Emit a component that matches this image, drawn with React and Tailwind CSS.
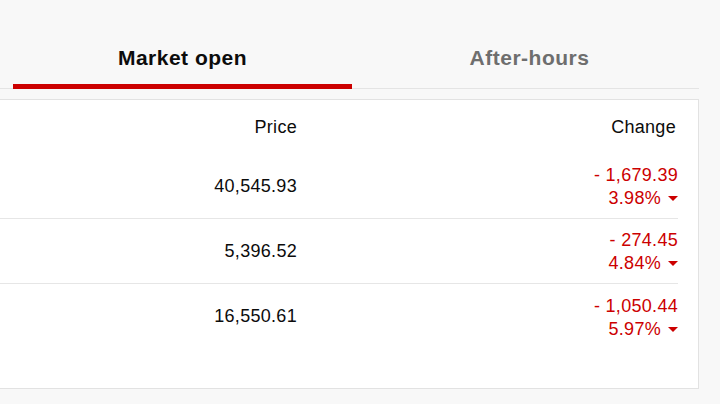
import React from "react";

const rows = [
  { price: "40,545.93", change: "- 1,679.39", pct: "3.98%" },
  { price: "5,396.52", change: "- 274.45", pct: "4.84%" },
  { price: "16,550.61", change: "- 1,050.44", pct: "5.97%" },
];

function Down() {
  return (
    <svg width="10" height="5" viewBox="0 0 10 5" className="ml-[7px]">
      <path d="M0 0 H10 L5 5 Z" fill="#cc0000" />
    </svg>
  );
}

export default function App() {
  return (
    <div
      className="w-[720px] h-[404px] bg-[#f8f8f8] overflow-hidden text-[#0c0c0c]"
      style={{ fontFamily: '"Liberation Sans", Arial, sans-serif' }}
    >
      <div className="w-[699px] flex gap-[8px] pl-[13px] border-b border-[#e4e4e4]">
        <div className="flex-1 -mb-px pt-[44px] pb-[12px] border-b-[5px] border-[#cc0000] text-center text-[21px] leading-[28px] font-bold tracking-[0.5px]">
          Market open
        </div>
        <div className="flex-1 -mb-px pt-[44px] pb-[12px] border-b-[5px] border-transparent text-center text-[21px] leading-[28px] font-bold tracking-[0.5px] text-[#6e6e6e]">
          After-hours
        </div>
      </div>
      <div className="mt-[10px] w-[699px] h-[290px] bg-white border-t border-r border-b border-[#e2e2e2] pr-[20px] text-[18px] leading-[21px] tracking-[0.3px]">
        <div className="grid grid-cols-[297px_1fr] pt-[17px] pb-[16px]">
          <div className="text-right">Price</div>
          <div className="text-right pr-[2px]">Change</div>
        </div>
        {rows.map((r, i) => (
          <div
            key={i}
            className={
              "grid grid-cols-[297px_1fr] items-center h-[65px] " +
              (i < rows.length - 1 ? "border-b border-[#e6e6e6]" : "")
            }
          >
            <div className="text-right">{r.price}</div>
            <div className="flex flex-col items-end pt-[2px] text-[#cc0000]">
              <div>{r.change}</div>
              <div className="flex items-center mt-[2px]">
                <span>{r.pct}</span>
                <Down />
              </div>
            </div>
          </div>
        ))}
      </div>
    </div>
  );
}
